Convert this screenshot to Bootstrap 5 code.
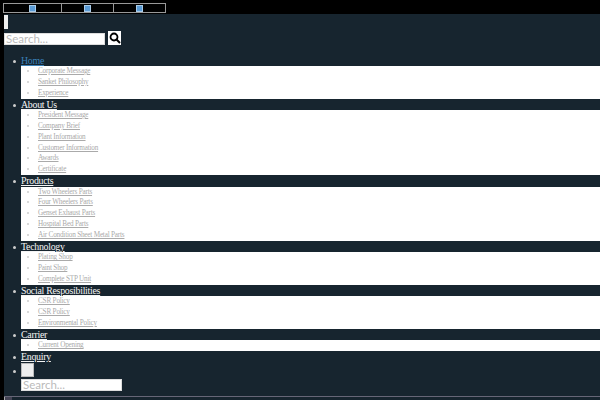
<!DOCTYPE html>
<html lang="en"><head><meta charset="utf-8">
<link href="https://cdn.jsdelivr.net/npm/bootstrap@5.3.0/dist/css/bootstrap.min.css" rel="stylesheet">
<style>
html,body{height:400px;overflow:hidden}
body{background:#000;font-family:"Liberation Serif",serif;color:#fff;line-height:1.2}
.topstrip{display:flex;width:163px;height:10px;margin:3px 0 0 3px;border:1px solid #999}
.topcell{display:flex;justify-content:center;align-items:center;border-right:1px solid #999}
.topcell:nth-child(1){width:58px}.topcell:nth-child(2){width:52px}.topcell:nth-child(3){flex:1;border-right:0}
.topicon{width:7px;height:7px;background:#5b9bd5;border:1px solid #a9cbe8}
.panel{background:#17252f;margin:1px 0 0 4px;height:382px;padding-top:1px;overflow:hidden}
.barlet{width:4px;height:14px;background:#eee}
.searchrow{display:flex;align-items:flex-end;gap:3px;margin:2px 0 0 0}
.searchbox{width:101px;height:12px;background:#fff;border:1px solid #ddd;color:#bbb;font:11.5px/10px "Lato",sans-serif;padding:0 0 0 1px;overflow:hidden}
.searchbtn{width:13px;height:14px;background:#fff;display:flex;align-items:center;justify-content:center}
.menu{list-style:none;margin:9.5px 0 0;padding:0 0 0 17px;font-size:9.6px}
.menu>li{position:relative}
.menu>li::before{content:"";position:absolute;left:-8px;top:5px;width:3px;height:3px;border-radius:50%;background:#ccc}
.menu>li:last-child::before{top:7px}
.toplink{display:block;height:11.5px;font-size:9.9px;line-height:12px;letter-spacing:-.28px;color:#f4f4f4;text-decoration:underline;text-decoration-thickness:.6px}
.toplink.activelink{color:#3a80b8}
.sub{list-style:disc;background:#fff;margin:0;padding:0 0 0 17px;color:#ccc}
.sub li{height:10.85px;line-height:11.5px;font-size:7.2px;letter-spacing:-.2px}
.sub a{color:#aaa;text-decoration:underline;text-decoration-thickness:.5px;display:block}
.mini{width:13px;height:14px;background:#eee;border:1px solid #bbb;display:block;margin-top:.3px}
.searchbox.two{margin:2px 0 0}
.foot{height:4px;background:#17252f;margin-left:4px;border-top:1px solid #667}
.footbit{display:block;width:8px;height:3px;border-left:1px solid #aaa;background:#445}
</style></head><body>
<div class="topstrip"><div class="topcell"><span class="topicon"></span></div><div class="topcell"><span class="topicon"></span></div><div class="topcell"><span class="topicon"></span></div></div>
<div class="panel">
<div class="barlet"></div>
<div class="searchrow"><div class="searchbox">Search...</div><div class="searchbtn"><svg width="12" height="12" viewBox="0 0 12 12"><circle cx="5" cy="5" r="3.5" fill="none" stroke="#000" stroke-width="1.8"/><path d="M7.5 7.5L11 11" stroke="#000" stroke-width="2"/></svg></div></div>
<ul class="menu">
<li><a class="toplink activelink" href="#">Home</a><ul class="sub"><li><a href="#">Corporate Message</a></li><li><a href="#">Sanket Philosophy</a></li><li><a href="#">Experience</a></li></ul></li>
<li><a class="toplink" href="#">About Us</a><ul class="sub"><li><a href="#">President Message</a></li><li><a href="#">Company Brief</a></li><li><a href="#">Plant Information</a></li><li><a href="#">Customer Information</a></li><li><a href="#">Awards</a></li><li><a href="#">Certificate</a></li></ul></li>
<li><a class="toplink" href="#">Products</a><ul class="sub"><li><a href="#">Two Wheelers Parts</a></li><li><a href="#">Four Wheelers Parts</a></li><li><a href="#">Genset Exhaust Parts</a></li><li><a href="#">Hospital Bed Parts</a></li><li><a href="#">Air Condition Sheet Metal Parts</a></li></ul></li>
<li><a class="toplink" href="#">Technology</a><ul class="sub"><li><a href="#">Plating Shop</a></li><li><a href="#">Paint Shop</a></li><li><a href="#">Complete STP Unit</a></li></ul></li>
<li><a class="toplink" href="#">Social Resposibilities</a><ul class="sub"><li><a href="#">CSR Policy</a></li><li><a href="#">CSR Policy</a></li><li><a href="#">Environmental Policy</a></li></ul></li>
<li><a class="toplink" href="#">Carrier</a><ul class="sub"><li><a href="#">Current Opening</a></li></ul></li>
<li><a class="toplink" href="#">Enquiry</a></li>
<li><span class="mini"></span><div class="searchbox two">Search...</div></li>
</ul>
</div>
<div class="foot"><span class="footbit"></span></div>
<script src="https://cdn.jsdelivr.net/npm/bootstrap@5.3.0/dist/js/bootstrap.bundle.min.js"></script>
</body></html>
